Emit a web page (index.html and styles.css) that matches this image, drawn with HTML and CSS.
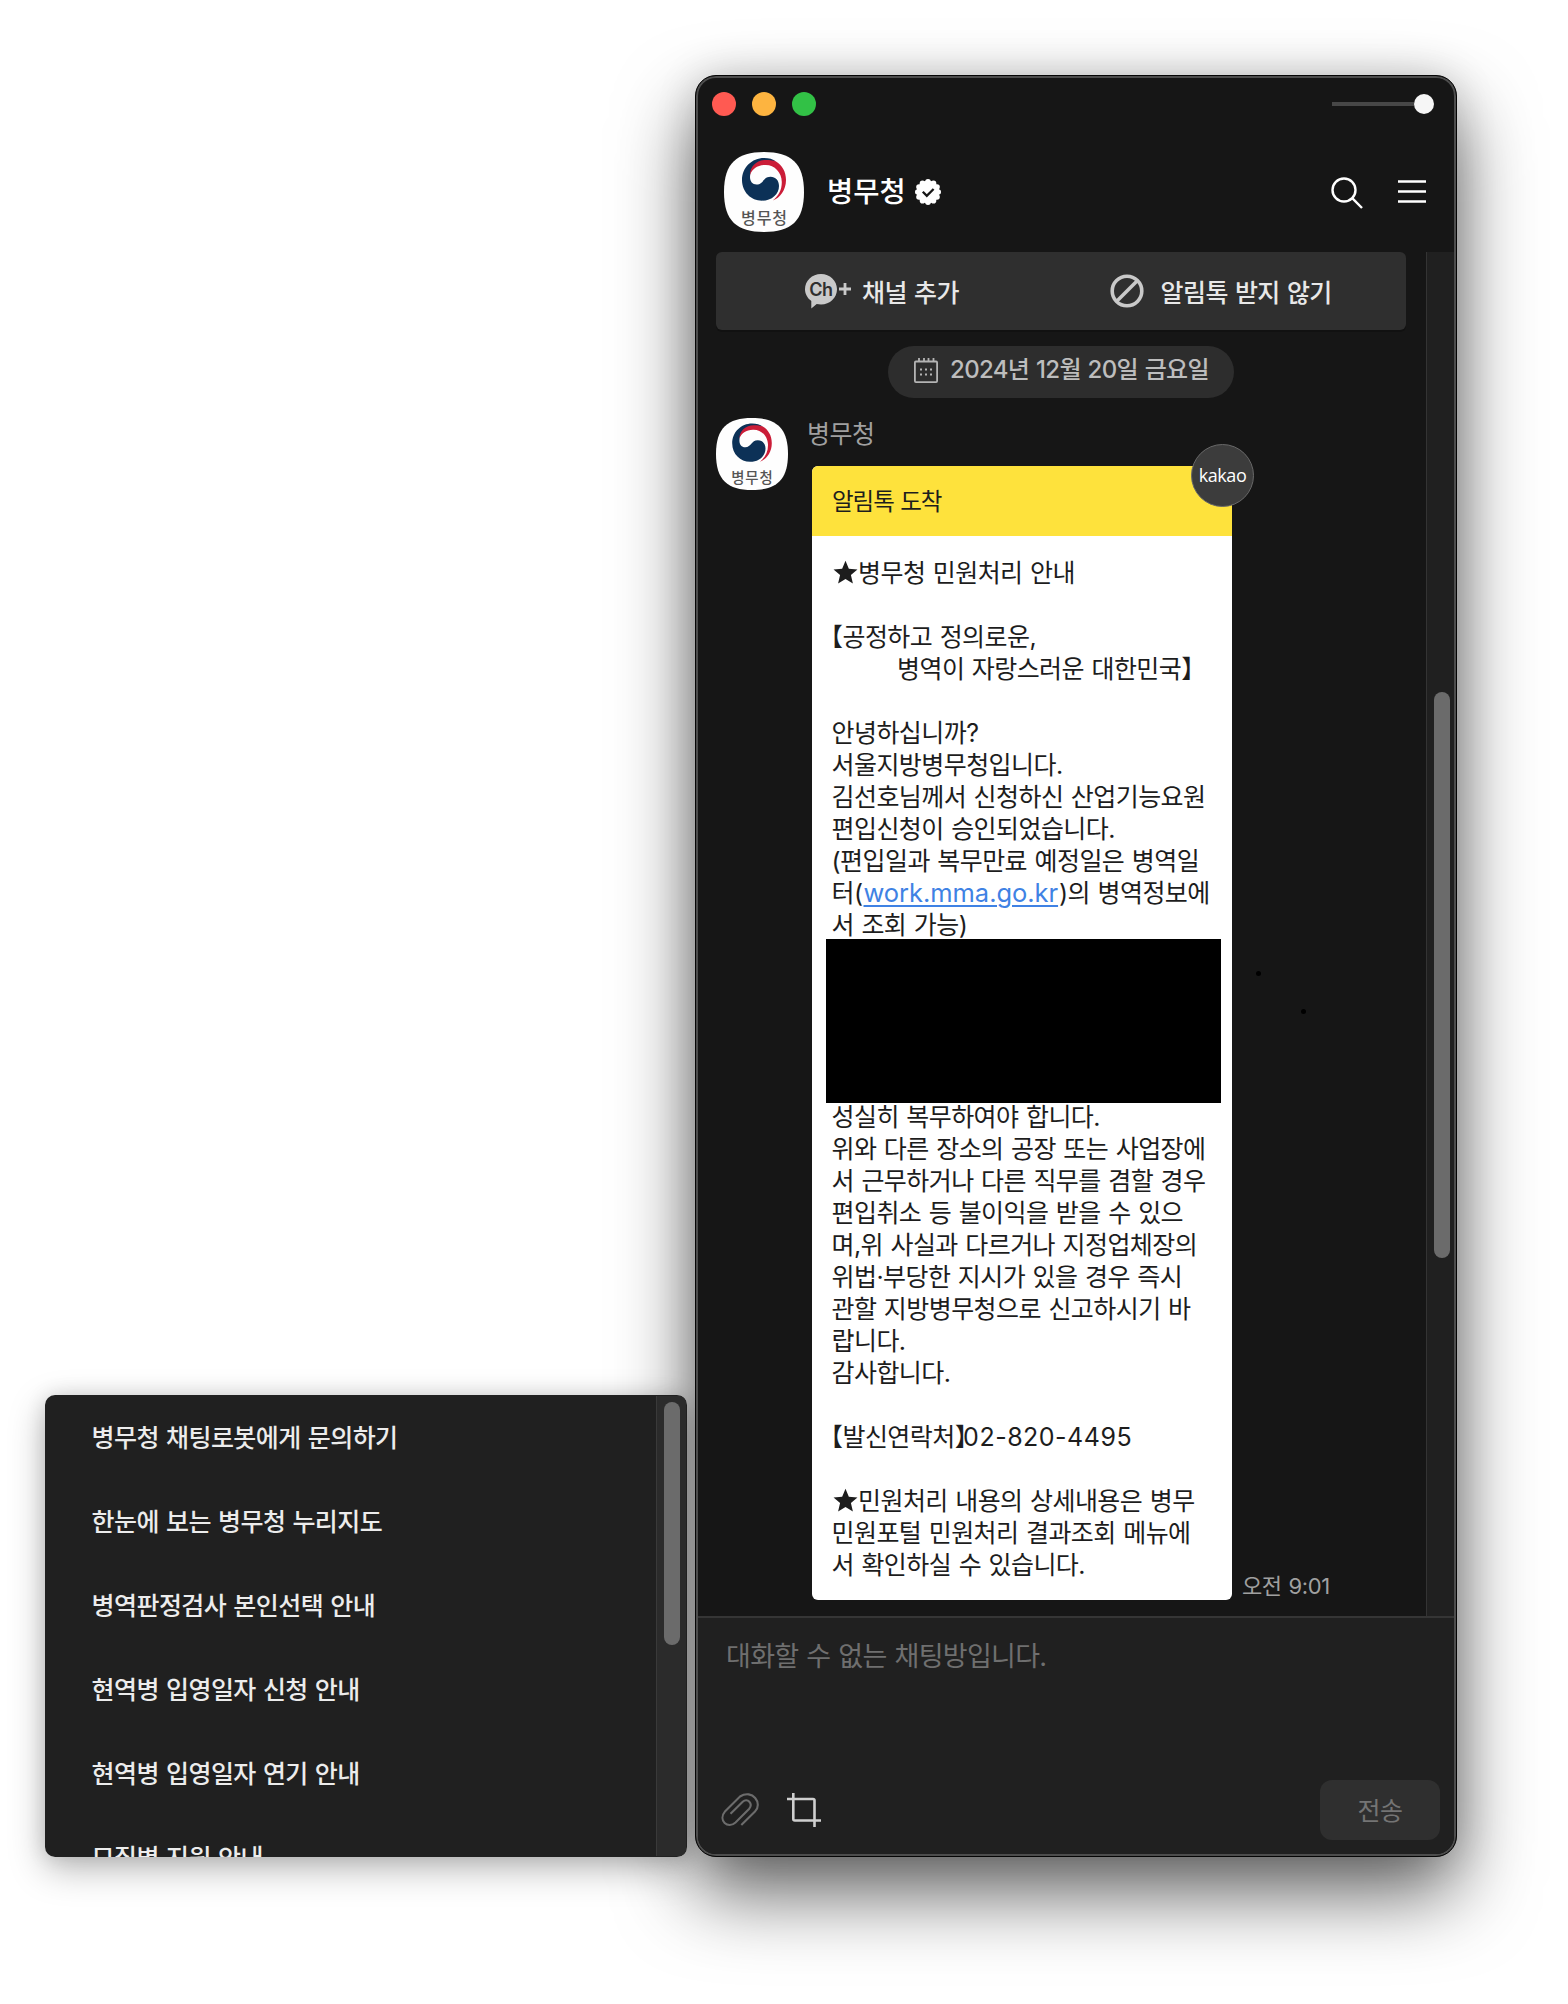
FILE: index.html
```html
<!DOCTYPE html>
<html lang="ko">
<head>
<meta charset="utf-8">
<title>병무청</title>
<link rel="stylesheet" href="styles.css">
</head>
<body>
<svg class="defs" width="0" height="0" aria-hidden="true">
  <symbol id="avatar" viewBox="0 0 80 80">
    <path fill="#fefefe" d="M40 0C67 0 80 11 80 40S67 80 40 80 0 69 0 40 13 0 40 0Z"/>
    <path fill="#0c3157" d="M40 6C28 6 18 15.500 18 28C18 40 27 48.700 38 48.700C48 48.700 55 42 55 34C55 28.500 51.500 24.800 46.500 24.800C39 24.800 39.500 32.500 32.500 32.500C28.500 32.500 26 29.500 26 25C26 17 32 12 40 10L52 9.500C49 7 45 6 40 6Z"/>
    <path fill="#cb1d38" d="M26 23C26 14 33 8 42 8C46 8 50 8.500 52 9.500C58 13 62 19.500 62 28C62 38 56 46 48.800 48.500C54.500 44 57.800 38 57.800 30C57.800 20 50 12.500 41 13C33.500 13.200 28 17 26 23Z"/>
    <text class="avatar-text" x="40.500" y="72" text-anchor="middle">병무청</text>
  </symbol>
</svg>
<main class="desktop">
  <aside class="popup">
    <ul class="menu">
      <li>병무청 채팅로봇에게 문의하기</li>
      <li>한눈에 보는 병무청 누리지도</li>
      <li>병역판정검사 본인선택 안내</li>
      <li>현역병 입영일자 신청 안내</li>
      <li>현역병 입영일자 연기 안내</li>
      <li>모집병 지원 안내</li>
    </ul>
    <div class="popup-track"><div class="popup-thumb"></div></div>
  </aside>

  <section class="window">
    <div class="titlebar">
      <div class="lights"><i class="red"></i><i class="amber"></i><i class="green"></i></div>
      <div class="slider"><span class="rail"></span><span class="knob"></span></div>
    </div>
    <header class="header">
      <svg class="avatar-lg"><use href="#avatar"/></svg>
      <h1>병무청</h1>
      <svg class="verified" viewBox="0 0 26 26">
        <g fill="#fff"><circle cx="13" cy="13" r="11.300"/><circle cx="13" cy="2.900" r="2.900"/><circle cx="18.500" cy="4.200" r="2.800"/><circle cx="22" cy="8" r="2.800"/><circle cx="23.200" cy="13" r="2.800"/><circle cx="22" cy="18" r="2.800"/><circle cx="18.500" cy="21.800" r="2.800"/><circle cx="13" cy="23.100" r="2.900"/><circle cx="7.500" cy="21.800" r="2.800"/><circle cx="4" cy="18" r="2.800"/><circle cx="2.800" cy="13" r="2.800"/><circle cx="4" cy="8" r="2.800"/><circle cx="7.500" cy="4.200" r="2.800"/></g>
        <path d="M7.800 12.800l4 4 6.800-6.800" fill="none" stroke="#161616" stroke-width="2.300"/>
      </svg>
      <div class="tools">
        <svg width="32" height="32" viewBox="0 0 32 32" fill="none" stroke="#fff" stroke-width="2.400"><circle cx="13" cy="13" r="11.500"/><path d="M21.200 21.200L31 31"/></svg>
        <svg width="28" height="24" viewBox="0 0 28 24" stroke="#fff" stroke-width="2.600"><path d="M0 1.500h28M0 11.500h28M0 21.500h28"/></svg>
      </div>
    </header>

    <div class="chat">
      <div class="stream">
        <nav class="actions">
          <a class="add">
            <svg width="46" height="35" viewBox="0 0 46 35"><path fill="#c9c9c9" d="M16 0C25 0 32 6.700 32 15.300S25 30.500 16 30.500C14.500 30.500 13 30.300 11.700 30L6.300 34.600V27C2.500 24.300 0 20 0 15.300C0 6.700 7 0 16 0Z"/><path d="M34 15h12M40 9v12" stroke="#c9c9c9" stroke-width="2.800"/><text class="ch" x="15.800" y="21.500" text-anchor="middle">Ch</text></svg>
            <span>채널 추가</span>
          </a>
          <a class="block">
            <svg width="34" height="34" viewBox="0 0 34 34" fill="none" stroke="#c9c9c9" stroke-width="3.600"><circle cx="17" cy="17" r="14.800"/><path d="M6.500 27.500L27.500 6.500"/></svg>
            <span>알림톡 받지 않기</span>
          </a>
        </nav>
        <div class="date">
          <svg width="24" height="25" viewBox="0 0 24 25" fill="none" stroke="#b4b4b4" stroke-width="1.800"><rect x=".9" y="3.500" width="22.200" height="20.600" rx="1"/><path d="M5 0v4M10 0v4M14.500 0v4M19.500 0v4" stroke-width="1.800"/><path d="M6 11.500h12M6 16.500h12" stroke-width="2.200" stroke-dasharray="2 3"/></svg>
          <span>2024년 12월 20일 금요일</span>
        </div>
        <div class="message">
          <svg class="avatar-sm"><use href="#avatar"/></svg>
          <div class="message-main">
            <div class="sender">병무청</div>
            <div class="bubble-row">
              <article class="bubble">
                <div class="bubble-head">알림톡 도착</div>
                <span class="badge">kakao</span>
                <div class="bubble-body">
                  <p><svg class="star" viewBox="0 0 24 24"><path d="M12 .8l3.200 7.600 8.300.7-6.300 5.400 1.900 8.100L12 18.300l-7.100 4.300 1.900-8.100L.5 9.100l8.300-.7Z"/></svg>병무청 민원처리 안내</p>
                  <p class="gap"><b class="open">【</b>공정하고 정의로운,</p>
                  <p class="indent">병역이 자랑스러운 대한민국<b class="close">】</b></p>
                  <p class="gap">안녕하십니까?</p>
                  <p>서울지방병무청입니다.</p>
                  <p>김선호님께서 신청하신 산업기능요원</p>
                  <p>편입신청이 승인되었습니다.</p>
                  <p>(편입일과 복무만료 예정일은 병역일</p>
                  <p>터(<a class="link">work.mma.go.kr</a>)의 병역정보에</p>
                  <p>서 조회 가능)</p>
                  <div class="redacted"></div>
                  <p>성실히 복무하여야 합니다.</p>
                  <p>위와 다른 장소의 공장 또는 사업장에</p>
                  <p>서 근무하거나 다른 직무를 겸할 경우</p>
                  <p>편입취소 등 불이익을 받을 수 있으</p>
                  <p>며,위 사실과 다르거나 지정업체장의</p>
                  <p>위법·부당한 지시가 있을 경우 즉시</p>
                  <p>관할 지방병무청으로 신고하시기 바</p>
                  <p>랍니다.</p>
                  <p>감사합니다.</p>
                  <p class="gap"><b class="open">【</b>발신연락처<b class="close">】</b><span class="phone">02-820-4495</span></p>
                  <p class="gap"><svg class="star" viewBox="0 0 24 24"><path d="M12 .8l3.200 7.600 8.300.7-6.300 5.400 1.900 8.100L12 18.300l-7.100 4.300 1.900-8.100L.5 9.100l8.300-.7Z"/></svg>민원처리 내용의 상세내용은 병무</p>
                  <p>민원포털 민원처리 결과조회 메뉴에</p>
                  <p>서 확인하실 수 있습니다.</p>
                </div>
              </article>
              <time>오전 9:01</time>
              <i class="speck one"></i><i class="speck two"></i>
            </div>
          </div>
        </div>
      </div>
      <div class="track"><div class="thumb"></div></div>
    </div>

    <footer class="composer">
      <div class="placeholder">대화할 수 없는 채팅방입니다.</div>
      <div class="composer-bar">
        <svg width="38" height="36" viewBox="0 0 38 36" fill="none" stroke="#6c6c6c" stroke-width="2.100"><path d="M20.300 33L34 19.500C42 11.500 31.500-3.500 19 4.500L4.200 19.200C-3.500 28.500 7 37.500 14.500 30.500L28 17C32.500 11.500 26.500 5.500 21.700 9.700L9.500 21.700"/></svg>
        <svg class="crop" width="34" height="34" viewBox="0 0 34 34" fill="none" stroke="#cfcfcf" stroke-width="2.600"><path d="M0 6h26q1.500 0 1.500 1.500V34M6.300 0v26q0 1.500 1.500 1.500H34"/></svg>
        <button class="send">전송</button>
      </div>
    </footer>
  </section>
</main>
</body>
</html>
```
FILE: styles.css
```css
* { box-sizing: border-box; }

body {
  margin: 0;
  background: #fff;
  font-family: Inter, "Noto Sans CJK KR", sans-serif;
  font-size: 25px;
  letter-spacing: -0.56px;
  word-spacing: 1px;
}

.defs { position: absolute; }

.desktop {
  display: flex;
  gap: 8px;
  align-items: flex-end;
  width: 1568px;
  height: 2004px;
  padding: 75px 0 147px 45px;
  overflow: hidden;
}

/* Suggestion menu */
.popup {
  position: relative;
  z-index: 1;
  display: flex;
  width: 642px;
  height: 462px;
  padding: 1px;
  background: #202020;
  border-radius: 10px;
  overflow: hidden;
  flex: none;
}
.desktop::before {
  content: "";
  width: 642px;
  height: 462px;
  margin-right: -650px;
  border-radius: 10px;
  box-shadow: 0 12px 36px rgba(0, 0, 0, .28), 0 0 20px rgba(0, 0, 0, .12);
  flex: none;
}
.menu { flex: 1; margin: 0; padding: 0 0 0 45.600px; list-style: none; }
.menu li {
  height: 84px;
  line-height: 85px;
  color: #ececec;
  font-weight: 500;
}
.popup-track {
  width: 30px;
  height: 460px;
  padding: 6px 0 0 7px;
  background: #2b2b2b;
  border-left: 1px solid #3a3a3a;
}
.popup-thumb { width: 16px; height: 243px; background: #6b6b6b; border-radius: 8px; }

/* Chat window */
.window {
  display: flex;
  flex-direction: column;
  flex: none;
  width: 762px;
  height: 1782px;
  background: #161616;
  border: 1px solid #050505;
  border-radius: 21px;
  box-shadow: inset 0 0 0 2px #4d4d4d, 0 36px 78px rgba(0, 0, 0, .62), 0 0 40px rgba(0, 0, 0, .14);
}

.titlebar {
  display: flex;
  justify-content: space-between;
  align-items: center;
  height: 56px;
  padding: 0 22px 0 16px;
}
.lights { display: flex; gap: 16px; }
.lights i { width: 24px; height: 24px; border-radius: 50%; }
.red { background: #ff5a52; }
.amber { background: #fdb440; }
.green { background: #32c146; }
.slider { display: flex; align-items: center; }
.rail { width: 82px; height: 4px; background: #474747; }
.knob { width: 20px; height: 20px; background: #f6f6f6; border-radius: 50%; }

.header { display: flex; align-items: center; height: 120px; padding: 0 30px 0 28px; }
.avatar-lg { width: 80px; height: 80px; }
.avatar-sm { width: 72px; height: 72px; flex: none; }
.avatar-text {
  font-family: "Noto Sans CJK KR", sans-serif;
  font-size: 16px;
  font-weight: 500;
  letter-spacing: 1px;
  fill: #555;
}
h1 {
  margin: 0 9px 0 23px;
  color: #fff;
  font-size: 28.500px;
  font-weight: 500;
  letter-spacing: 0;
  line-height: 40px;
}
.verified { width: 26px; height: 26px; }
.tools { display: flex; align-items: center; gap: 35px; margin-left: auto; }
.tools svg:first-child { margin-top: 2px; }

.chat { display: flex; height: 1364px; padding-right: 2px; }
.stream { flex: none; width: 730px; padding-left: 20px; }
.actions {
  display: flex;
  width: 690px;
  height: 78px;
  background: #2f2f2f;
  border-radius: 6px;
  box-shadow: 0 2px 0 #111;
  color: #e8e8e8;
  font-weight: 500;
}
.actions a { display: flex; align-items: center; }
.actions span { margin-top: -1px; }
.add { width: 394px; padding-left: 89px; gap: 11px; }
.block { gap: 16.500px; }
.ch { font: 600 18px Inter, sans-serif; letter-spacing: -0.5px; fill: #2f2f2f; }

.date {
  display: flex;
  gap: 12px;
  width: 346px;
  height: 52px;
  margin: 16px 0 20px 172px;
  padding-left: 26px;
  background: #2d2d2d;
  border-radius: 26px;
  color: #bdbdbd;
  font-size: 24px;
  font-weight: 500;
  letter-spacing: -0.66px;
  line-height: 48px;
  white-space: nowrap;
}
.date svg { margin-top: 12px; }

.message { display: flex; gap: 24px; }
.sender { height: 48px; margin-left: -5px; line-height: 33px; color: #a0a0a0; }
.bubble-row { position: relative; display: flex; align-items: flex-end; gap: 10px; }
.bubble { position: relative; width: 420px; height: 1134px; background: #fff; border-radius: 6px; color: #1d1d1d; }
.bubble-head {
  height: 70px;
  padding-left: 20px;
  background: #fee23c;
  border-radius: 6px 0 0 0;
  font-size: 23.500px;
  letter-spacing: -1.050px;
  line-height: 72px;
}
.badge {
  position: absolute;
  top: -22px;
  right: -22px;
  width: 63px;
  height: 63px;
  background: #3c3c3c;
  border: 1px solid #686868;
  border-radius: 50%;
  color: #fff;
  font: 18px/61px "Open Sans", sans-serif;
  letter-spacing: -0.4px;
  text-align: center;
}
.bubble-body { padding: 20.500px 0 0 19.500px; }
.bubble-body p { height: 32px; margin: 0; line-height: 32px; white-space: pre; }
.bubble-body p.gap { margin-top: 32px; }
.bubble-body p.indent { padding-left: 65.500px; }
.star { width: 25px; height: 25px; margin: 0 0 0 1.500px; vertical-align: -3px; fill: #1d1d1d; }
.bubble-body b { font-weight: 400; }
.open { margin-left: -13.500px; }
.close { margin-right: -12px; }
.link {
  margin: 0 1px;
  color: #3f82e4;
  font-size: 25.500px;
  letter-spacing: -0.050px;
  text-decoration: underline;
  text-decoration-thickness: 2px;
  text-underline-offset: 3px;
}
.phone { margin-left: -4px; letter-spacing: 0.500px; }
.redacted { width: 395px; height: 164px; margin: -1.500px 0 -2.500px -5.500px; background: #000; }
time { margin-bottom: -2px; color: #a0a0a0; font-size: 22px; letter-spacing: -0.4px; line-height: 32px; }
.speck { position: absolute; width: 5px; height: 5px; background: #000; border-radius: 50%; }
.one { left: 444px; top: 505px; }
.two { left: 489px; top: 543px; }

.track { flex: none; width: 28px; padding: 440px 0 0 7px; background: #202020; border-left: 1px solid #343434; }
.thumb { width: 16px; height: 566px; background: #6b6b6b; border-radius: 8px; }

.composer {
  flex: 1;
  margin: 0 2px 2px;
  background: #202020;
  border-top: 2px solid #353535;
  border-radius: 0 0 18px 18px;
}
.placeholder {
  height: 162px;
  padding: 19px 0 0 28px;
  color: #6f6f6f;
  font-size: 27px;
  letter-spacing: -0.7px;
  line-height: 40px;
}
.composer-bar { display: flex; align-items: center; height: 60px; padding: 0 14px 0 23px; }
.crop { margin-left: 28px; }
.send {
  width: 120px;
  height: 60px;
  margin-left: auto;
  padding: 0 0 2px;
  background: #2f2f2f;
  border: 0;
  border-radius: 12px;
  color: #747474;
  font: inherit;
  letter-spacing: inherit;
}
```
